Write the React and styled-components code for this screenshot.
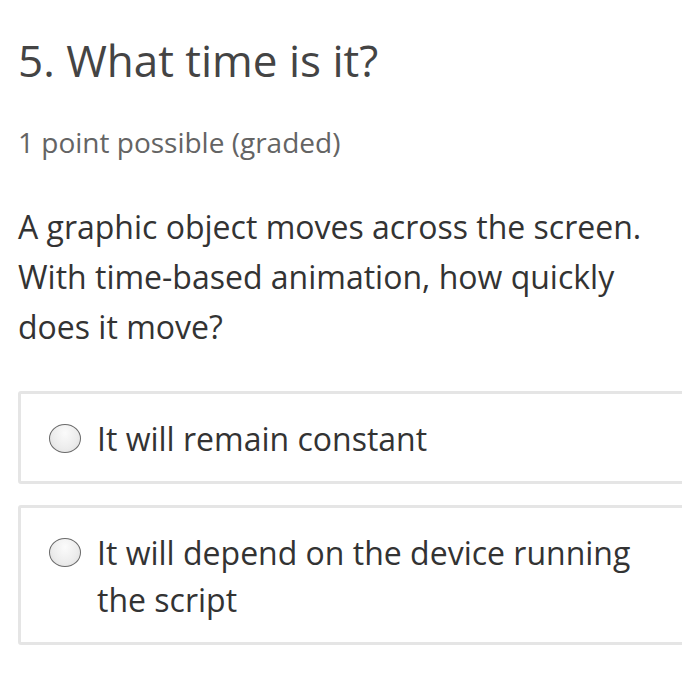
import React from 'react';
import styled, { createGlobalStyle } from 'styled-components';

const GlobalStyle = createGlobalStyle`
  html, body {
    margin: 0;
    padding: 0;
    background: #ffffff;
    overflow: hidden;
  }
  body {
    font-family: "Open Sans", "Noto Sans", sans-serif;
  }
`;

const Page = styled.div`
  padding: 30px 0 0 18px;
  width: 700px;
`;

const Title = styled.h2`
  margin: 0;
  font-size: 44px;
  line-height: 60px;
  font-weight: 400;
  color: #444444;
`;

const Points = styled.div`
  margin-top: 32px;
  font-size: 28px;
  line-height: 40px;
  color: #646464;
`;

const Prompt = styled.p`
  margin: 40px 0 0 0;
  font-size: 32px;
  line-height: 50px;
  color: #333333;
  width: 640px;
`;

const Choices = styled.div`
  margin-top: 39px;
  display: flex;
  flex-direction: column;
  gap: 21px;
`;

const Choice = styled.label`
  display: flex;
  align-items: flex-start;
  gap: 16px;
  padding: 21px 20px 19px 28px;
  border: 3px solid #e5e5e5;
  border-radius: 3px;
  font-size: 32px;
  line-height: 47px;
  color: #333333;
`;

const Radio = styled.span`
  flex: none;
  width: 32px;
  height: 29px;
  margin-top: 9px;
  border-radius: 50%;
  border: 1.5px solid #6a6a6a;
  background: radial-gradient(ellipse at 50% 30%, #fbfbfb 0%, #ececec 60%, #d9d9d9 100%);
  box-sizing: border-box;
`;

const ChoiceText = styled.span`
  max-width: 560px;
`;

const choices = [
  'It will remain constant',
  'It will depend on the device running the script',
];

export default function App() {
  return (
    <>
      <GlobalStyle />
      <Page>
        <Title>5. What time is it?</Title>
        <Points>1 point possible (graded)</Points>
        <Prompt>
          A graphic object moves across the screen. With time-based animation, how quickly does it move?
        </Prompt>
        <Choices>
          {choices.map((c) => (
            <Choice key={c}>
              <Radio />
              <ChoiceText>{c}</ChoiceText>
            </Choice>
          ))}
        </Choices>
      </Page>
    </>
  );
}
